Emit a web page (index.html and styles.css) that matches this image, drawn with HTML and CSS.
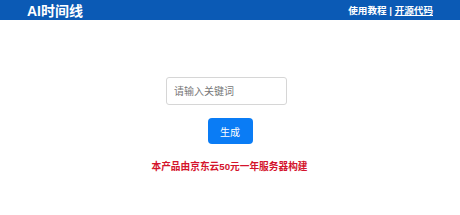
FILE: index.html
```html
<!DOCTYPE html>
<html lang="zh">
<head>
  <meta charset="UTF-8">
  <title>AI时间线</title>
  <link rel="stylesheet" href="styles.css">
</head>
<body>
  <header class="topbar">
    <div class="brand">AI时间线</div>
    <nav class="links">
      <a href="#">使用教程</a> | <a href="#" class="repo">开源代码</a>
    </nav>
  </header>

  <main class="main">
    <input class="keyword" type="text" placeholder="请输入关键词">
    <button class="gen">生成</button>
    <p class="notice">本产品由京东云50元一年服务器构建</p>
  </main>
</body>
</html>
```

FILE: styles.css
```css
body {
  margin: 0;
  font-family: "Liberation Sans", "Noto Sans CJK SC", sans-serif;
  background: #fff;
}

/* Верхняя панель */
.topbar {
  height: 20px;
  background: #0b5ab5;
  color: #fff;
  display: flex;
  align-items: center;
  justify-content: space-between;
  padding: 0 27px;
}

.brand {
  font-size: 14px;
  font-weight: bold;
}

.links {
  font-size: 9.6px;
  font-weight: bold;
}

.links a {
  color: #fff;
  text-decoration: none;
}

.links a.repo {
  text-decoration: underline;
}

/* Форма */
.main {
  display: flex;
  flex-direction: column;
  align-items: center;
  padding-top: 57px;
}

.keyword {
  box-sizing: border-box;
  width: 121px;
  height: 28px;
  margin-right: 7px;
  padding: 0 7px;
  border: 1px solid #d6d6d6;
  border-radius: 3px;
  font-family: inherit;
  font-size: 10px;
}

.keyword::placeholder {
  color: #777;
}

.gen {
  margin-top: 13px;
  width: 45px;
  height: 26px;
  border: none;
  border-radius: 4px;
  background: #0a7cf5;
  color: #fff;
  font-family: inherit;
  font-size: 10px;
}

.notice {
  margin: 15px 1px 0 0;
  color: #d4142c;
  font-size: 9.7px;
  font-weight: bold;
}
```
